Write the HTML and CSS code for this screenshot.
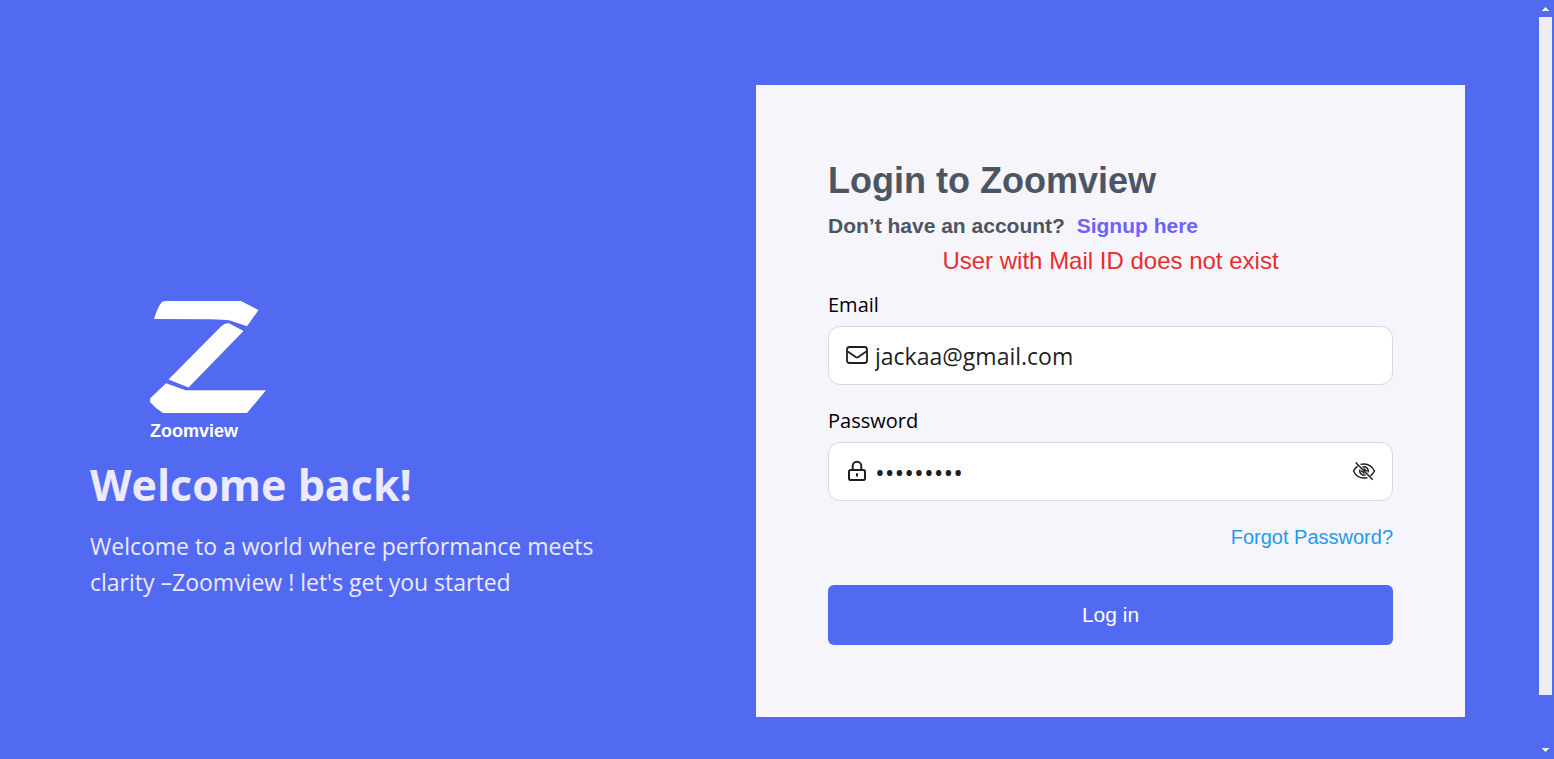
FILE: index.html
```html
<!DOCTYPE html>
<html lang="en">
<head>
<meta charset="utf-8">
<meta name="viewport" content="width=device-width, initial-scale=1">
<title>Login - Zoomview</title>
<link rel="stylesheet" href="styles.css">
</head>
<body>
<main class="page">
  <section class="intro">
    <div class="brand">
      <svg class="brand-logo" viewBox="0 0 116 112" aria-hidden="true">
        <path d="M4 18Q8 5 12 1L15 0H91L108.500 9 97 25.300 80 19.500Q75 18.500 60 18.300Z"/>
        <path d="M93.500 30L79 22.300Q74.500 22 71 25.500L18.500 78.500 38.500 86.500Z"/>
        <path d="M16 82.300L0 97.500V101Q6 108 13 112H97L116 89.300H35.500Z"/>
      </svg>
      <span class="brand-name">Zoomview</span>
    </div>
    <h1 class="intro-title">Welcome back!</h1>
    <p class="intro-text">Welcome to a world where performance meets clarity –Zoomview ! let's get you started</p>
  </section>

  <form class="card">
    <h2 class="card-title">Login to Zoomview</h2>
    <p class="signup">Don’t have an account? <a class="signup-link" href="#">Signup here</a></p>
    <p class="error" role="alert">User with Mail ID does not exist</p>

    <div class="field">
      <label class="label" for="email">Email</label>
      <div class="control">
        <svg class="icon icon-mail" viewBox="0 0 24 24" aria-hidden="true">
          <rect x="2" y="4" width="20" height="16" rx="2.500"/>
          <path d="M2 8L10.700 13.900Q12 14.700 13.300 13.900L22 8"/>
        </svg>
        <input class="input" id="email" type="email" value="jackaa@gmail.com">
      </div>
    </div>

    <div class="field">
      <label class="label" for="password">Password</label>
      <div class="control">
        <svg class="icon icon-lock" viewBox="0 0 24 24" aria-hidden="true">
          <rect x="4" y="11" width="16" height="10" rx="1.800"/>
          <path d="M7.700 11V7a4.300 4.300 0 0 1 8.600 0V11M12 14.200V17.600"/>
        </svg>
        <input class="input input-password" id="password" type="password" value="jackaa123">
        <button class="toggle" type="button" aria-label="Show password">
          <svg class="icon" viewBox="0 0 24 24" aria-hidden="true">
            <path d="M8.500 5.400Q10.200 4.900 12 4.900C17.200 4.900 20.800 8.500 22.500 12Q21 14.900 18.400 16.900M15.500 18.600Q13.800 19.100 12 19.100C6.800 19.100 3.200 15.500 1.500 12Q3 9.100 5.600 7.100"/>
            <path d="M10.500 8.200A4.100 4.100 0 0 1 15.900 13.500M13.500 15.800A4.100 4.100 0 0 1 8.100 10.500"/>
            <path d="M12.200 9.200Q12.300 11.700 14.900 11.800M11.800 14.800Q11.700 12.300 9.100 12.200"/>
            <path d="M3.700 3.500L20.700 20.700"/>
          </svg>
        </button>
      </div>
    </div>

    <a class="forgot" href="#">Forgot Password?</a>
    <button class="submit" type="submit">Log in</button>
  </form>
</main>

<div class="scrollbar" aria-hidden="true">
  <svg class="arrow" viewBox="0 0 7 4"><path d="M3 0h1v1h1v1h1v1h1v1H0V3h1V2h1V1h1z"/></svg>
  <div class="track"><div class="thumb"></div></div>
  <svg class="arrow" viewBox="0 0 7 4"><path d="M0 0h7v1H6v1H5v1H4v1H3V3H2V2H1V1H0z"/></svg>
</div>
</body>
</html>
```
FILE: styles.css
```css
* {
  box-sizing: border-box;
}

body {
  margin: 0;
  background: #5269f2;
  font-family: "Liberation Sans", Arial, sans-serif;
}

h1,
h2,
p {
  margin: 0;
}

a {
  text-decoration: none;
}

.page {
  display: grid;
  grid-template-columns: 666fr 709fr;
  padding: 85px 89px 42px 90px;
}

/* Left side */
.intro {
  padding-top: 216px;
  color: #ede9fe;
  font-family: "Segoe UI", "Open Sans", "Noto Sans", sans-serif;
}

.brand {
  display: flex;
  flex-direction: column;
  padding-left: 60px;
  color: #fff;
}

.brand-logo {
  width: 116px;
  height: 112px;
  fill: currentColor;
}

.brand-name {
  margin-top: 4px;
  font: bold 18px/28px "Liberation Sans", Arial, sans-serif;
}

.intro-title {
  margin-top: 12px;
  font-size: 43px;
  font-weight: 700;
  line-height: 56px;
}

.intro-text {
  max-width: 520px;
  margin-top: 15px;
  font-size: 23px;
  line-height: 36px;
}

/* Login card */
.card {
  display: flex;
  flex-direction: column;
  padding: 72px;
  background: #f6f5fc;
}

.card-title {
  color: #4b5563;
  font-size: 36px;
  line-height: 48px;
}

.signup {
  margin-top: 6px;
  color: #4b5563;
  font-size: 21px;
  font-weight: 700;
  line-height: 30px;
}

.signup-link {
  margin-left: 6px;
  color: #6c63ff;
}

.error {
  margin-top: 2px;
  color: #e62e2e;
  font-size: 24px;
  line-height: 36px;
  text-align: center;
}

.field {
  display: flex;
  flex-direction: column;
  margin-top: 10px;
}

.field + .field {
  margin-top: 20px;
}

.label {
  margin-bottom: 5px;
  color: #000;
  font: 20px/32px "Segoe UI", "Open Sans", "Noto Sans", sans-serif;
}

.control {
  display: flex;
  align-items: center;
  height: 59px;
  padding: 0 16px;
  background: #fff;
  border: 1px solid #d9d9d9;
  border-radius: 12px;
}

.icon {
  display: block;
  flex: none;
  width: 24px;
  height: 24px;
  margin-bottom: 2px;
  fill: none;
  stroke: #1f1f1f;
  stroke-width: 1.5;
}

.icon-mail {
  stroke-width: 1.8;
}

.icon-lock {
  stroke-width: 2;
}

.input {
  flex: 1;
  min-width: 0;
  padding: 0 0 0 6px;
  border: 0;
  outline: 0;
  background: none;
  color: #1f1f1f;
  font: 23px/36px "Segoe UI", "Open Sans", "Noto Sans", sans-serif;
}

.input-password {
  font-size: 26px;
}

.toggle {
  padding: 0;
  border: 0;
  background: none;
}

.forgot {
  align-self: flex-end;
  margin-top: 20px;
  color: #1d9bf0;
  font-size: 20px;
  line-height: 32px;
}

.submit {
  height: 60px;
  margin-top: 32px;
  border: 0;
  border-radius: 6px;
  background: #5269f2;
  color: #fff;
  font: 21px/30px "Liberation Sans", Arial, sans-serif;
}

/* Scroll indicator along the window's right edge */
.scrollbar {
  position: fixed;
  top: 0;
  right: 0;
  bottom: 0;
  display: flex;
  flex-direction: column;
  align-items: center;
  width: 17px;
  padding: 7px 0;
}

.arrow {
  width: 7px;
  height: 4px;
  fill: #eee;
}

.track {
  flex: 1;
  width: 13px;
  padding: 6px 0 17px;
}

.thumb {
  height: 95%;
  background: #eee;
}
```
